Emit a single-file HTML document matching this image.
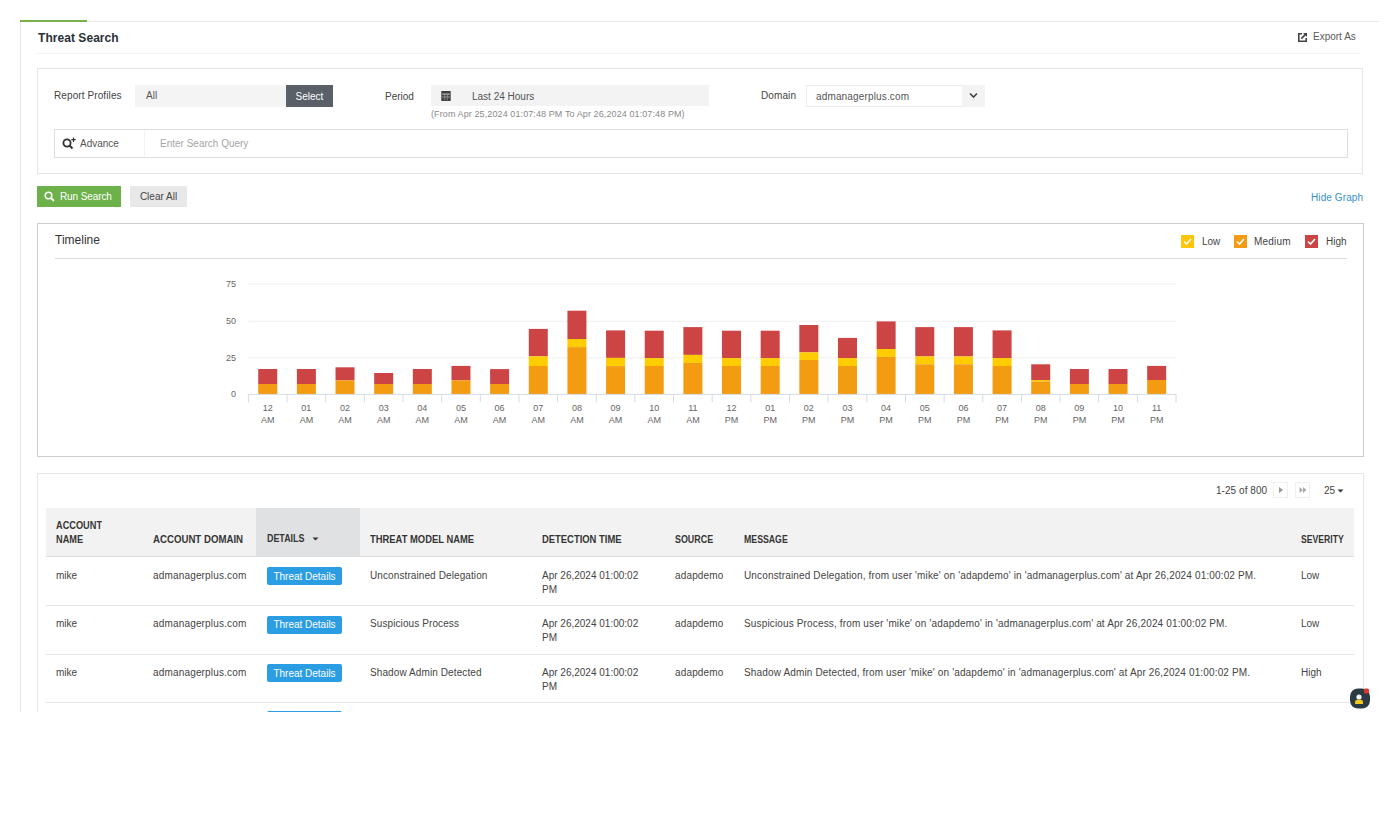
<!DOCTYPE html>
<html><head><meta charset="utf-8">
<style>
*{box-sizing:border-box;margin:0;padding:0}
html,body{width:1400px;height:826px;background:#fff;overflow:hidden}
body{font-family:"Liberation Sans",sans-serif;font-size:10px;color:#333;position:relative}
.a{position:absolute}
.t{position:absolute;white-space:nowrap;line-height:14px}
#clip{position:absolute;left:0;top:0;width:1400px;height:712px;overflow:hidden}
.box{position:absolute;border:1px solid #e3e3e3}
.btn{position:absolute;display:flex;align-items:center;white-space:nowrap}
.th{position:absolute;font-weight:bold;font-size:10px;line-height:14.3px;color:#363636;white-space:nowrap;transform-origin:0 0}
.td{position:absolute;font-size:10px;line-height:14px;color:#444;white-space:nowrap}
.tdb{position:absolute;background:#2b9de3;color:#fff;border-radius:2px;height:18px;width:75px;display:flex;align-items:center;justify-content:center;font-size:10px}
.rl{position:absolute;left:46px;width:1308px;height:1px;background:#e6e6e6}
</style></head><body>
<div id="clip">
  <!-- outer frame -->
  <div class="a" style="left:20px;top:21px;width:1360px;height:1px;background:#ebebeb"></div>
  <div class="a" style="left:20px;top:20px;width:67px;height:2px;background:#76b14c"></div>
  <div class="a" style="left:20px;top:22px;width:1px;height:700px;background:#e6e6e6"></div>

  <!-- header -->
  <div class="t" style="left:38px;top:31px;font-size:12px;font-weight:bold;color:#2a3036;line-height:14px;letter-spacing:0.05px">Threat Search</div>
  <div class="a" style="left:37px;top:53px;width:1323px;height:1px;background:#f2f2f2"></div>
  <svg class="a" style="left:1298px;top:33px" width="9" height="9" viewBox="0 0 9 9">
    <path d="M4 0.8 H0.8 V8.2 H8.2 V5" fill="none" stroke="#444" stroke-width="1.6"/>
    <path d="M5 0 H9 V4 Z" fill="#444"/>
    <path d="M3.3 5.7 L7.3 1.7" stroke="#444" stroke-width="1.7"/>
  </svg>
  <div class="t" style="left:1313px;top:30px;color:#5a5a5a">Export As</div>

  <!-- filter box -->
  <div class="box" style="left:37px;top:68px;width:1326px;height:106px;border-color:#e6e6e6"></div>
  <div class="t" style="left:54px;top:89px;color:#444;letter-spacing:0.1px">Report Profiles</div>
  <div class="a" style="left:135px;top:85px;width:151px;height:22px;background:#f4f4f4"></div>
  <div class="t" style="left:146px;top:89px;color:#555">All</div>
  <div class="btn" style="left:286px;top:85px;width:47px;height:22px;background:#596068;color:#fff;justify-content:center">Select</div>

  <div class="t" style="left:385px;top:90px;color:#444">Period</div>
  <div class="a" style="left:431px;top:85px;width:278px;height:21px;background:#f3f3f3"></div>
  <svg class="a" style="left:441px;top:91px" width="10" height="10" viewBox="0 0 10 10">
    <rect x="0.3" y="0" width="9.4" height="10" fill="#3f3f3f"/>
    <rect x="1.2" y="2.6" width="7.6" height="1" fill="#d8d8d8"/>
    <rect x="1.2" y="5.6" width="7.6" height="0.8" fill="#b8b8b8"/>
    <rect x="3.4" y="3.6" width="0.8" height="5.6" fill="#909090"/>
    <rect x="5.9" y="3.6" width="0.8" height="5.6" fill="#909090"/>
  </svg>
  <div class="t" style="left:472px;top:90px;color:#555">Last 24 Hours</div>
  <div class="t" style="left:431px;top:107px;font-size:9px;color:#8a8a8a;letter-spacing:0.1px">(From Apr 25,2024 01:07:48 PM To Apr 26,2024 01:07:48 PM)</div>

  <div class="t" style="left:761px;top:89px;color:#444;letter-spacing:0.1px">Domain</div>
  <div class="a" style="left:806px;top:85px;width:179px;height:22px;border:1px solid #ececec;background:#fff"></div>
  <div class="a" style="left:962px;top:85px;width:23px;height:22px;background:#f3f3f3"></div>
  <svg class="a" style="left:969px;top:92px" width="9" height="7" viewBox="0 0 9 7">
    <path d="M1 1.5 L4.5 5 L8 1.5" fill="none" stroke="#444" stroke-width="1.6"/>
  </svg>
  <div class="t" style="left:816px;top:90px;color:#555;letter-spacing:0.15px">admanagerplus.com</div>

  <div class="box" style="left:54px;top:129px;width:1294px;height:29px;border-color:#dedede"></div>
  <div class="a" style="left:144px;top:130px;width:1px;height:27px;background:#f3f3f3"></div>
  <svg class="a" style="left:62px;top:137px" width="15" height="13" viewBox="0 0 15 13">
    <circle cx="5" cy="6" r="3.6" fill="none" stroke="#333" stroke-width="1.8"/>
    <path d="M7.5 8.5 L10.5 11.5" stroke="#333" stroke-width="2"/>
    <path d="M11.5 0.5 V5 M9.3 2.7 H13.7" stroke="#333" stroke-width="1.2"/>
  </svg>
  <div class="t" style="left:80px;top:137px;color:#555">Advance</div>
  <div class="t" style="left:160px;top:137px;color:#a5a5a5">Enter Search Query</div>

  <!-- buttons -->
  <div class="btn" style="left:37px;top:186px;width:84px;height:21px;background:#6cb14a;color:#fff">
    <svg style="margin-left:7px" width="11" height="11" viewBox="0 0 11 11"><circle cx="4.5" cy="4.5" r="3.3" fill="none" stroke="#fff" stroke-width="1.6"/><path d="M7 7 L10 10" stroke="#fff" stroke-width="1.8"/></svg>
    <span style="margin-left:5px;letter-spacing:-0.1px">Run Search</span>
  </div>
  <div class="btn" style="left:130px;top:186px;width:57px;height:21px;background:#e8e8e8;color:#444;justify-content:center">Clear All</div>
  <div class="t" style="left:1311px;top:191px;color:#3a8fd0;letter-spacing:0.1px">Hide Graph</div>

  <!-- timeline -->
  <div class="box" style="left:37px;top:223px;width:1327px;height:234px;border-color:#cdcdcd"></div>
  <div class="t" style="left:55px;top:233px;font-size:12px;color:#333">Timeline</div>
  <div class="a" style="left:55px;top:258px;width:1292px;height:1px;background:#dcdcdc"></div>
  <!-- legend -->
  <svg class="a" style="left:1181px;top:235px" width="13" height="13" viewBox="0 0 13 13"><rect width="13" height="13" fill="#fdc60a"/><path d="M3 6.5 L5.5 9 L10 4" fill="none" stroke="#fff" stroke-width="1.4"/></svg>
  <div class="t" style="left:1202px;top:235px;color:#444">Low</div>
  <svg class="a" style="left:1234px;top:235px" width="13" height="13" viewBox="0 0 13 13"><rect width="13" height="13" fill="#f39c12"/><path d="M3 6.5 L5.5 9 L10 4" fill="none" stroke="#fff" stroke-width="1.6"/></svg>
  <div class="t" style="left:1254px;top:235px;color:#444;letter-spacing:0.2px">Medium</div>
  <svg class="a" style="left:1305px;top:235px" width="13" height="13" viewBox="0 0 13 13"><rect width="13" height="13" fill="#cc4444"/><path d="M3 6.5 L5.5 9 L10 4" fill="none" stroke="#fff" stroke-width="1.6"/></svg>
  <div class="t" style="left:1326px;top:235px;color:#444">High</div>

  <!-- CHART -->
  <svg id="chart" class="a" style="left:0;top:0;font-family:'Liberation Sans',sans-serif" width="1400" height="460"><rect x="248.4" y="357.4" width="927.6" height="1" fill="#f0f0f0"/><rect x="248.4" y="320.7" width="927.6" height="1" fill="#f0f0f0"/><rect x="248.4" y="283.5" width="927.6" height="1" fill="#f0f0f0"/><text x="236" y="397.4" text-anchor="end" font-size="9" fill="#666">0</text><text x="236" y="360.9" text-anchor="end" font-size="9" fill="#666">25</text><text x="236" y="324.2" text-anchor="end" font-size="9" fill="#666">50</text><text x="236" y="287.0" text-anchor="end" font-size="9" fill="#666">75</text><rect x="258.23" y="369.00" width="19" height="15.00" fill="#cc4444"/><rect x="258.23" y="384.00" width="19" height="10.40" fill="#f39c12"/><text x="267.73" y="410.8" text-anchor="middle" font-size="9" fill="#666">12</text><text x="267.73" y="422.5" text-anchor="middle" font-size="9" fill="#666">AM</text><rect x="296.88" y="369.00" width="19" height="15.00" fill="#cc4444"/><rect x="296.88" y="384.00" width="19" height="10.40" fill="#f39c12"/><text x="306.38" y="410.8" text-anchor="middle" font-size="9" fill="#666">01</text><text x="306.38" y="422.5" text-anchor="middle" font-size="9" fill="#666">AM</text><rect x="335.52" y="367.30" width="19" height="13.10" fill="#cc4444"/><rect x="335.52" y="380.40" width="19" height="14.00" fill="#f39c12"/><text x="345.02" y="410.8" text-anchor="middle" font-size="9" fill="#666">02</text><text x="345.02" y="422.5" text-anchor="middle" font-size="9" fill="#666">AM</text><rect x="374.18" y="373.00" width="19" height="11.00" fill="#cc4444"/><rect x="374.18" y="384.00" width="19" height="10.40" fill="#f39c12"/><text x="383.68" y="410.8" text-anchor="middle" font-size="9" fill="#666">03</text><text x="383.68" y="422.5" text-anchor="middle" font-size="9" fill="#666">AM</text><rect x="412.82" y="369.00" width="19" height="15.00" fill="#cc4444"/><rect x="412.82" y="384.00" width="19" height="10.40" fill="#f39c12"/><text x="422.32" y="410.8" text-anchor="middle" font-size="9" fill="#666">04</text><text x="422.32" y="422.5" text-anchor="middle" font-size="9" fill="#666">AM</text><rect x="451.47" y="365.90" width="19" height="14.50" fill="#cc4444"/><rect x="451.47" y="380.40" width="19" height="14.00" fill="#f39c12"/><text x="460.97" y="410.8" text-anchor="middle" font-size="9" fill="#666">05</text><text x="460.97" y="422.5" text-anchor="middle" font-size="9" fill="#666">AM</text><rect x="490.12" y="369.10" width="19" height="14.90" fill="#cc4444"/><rect x="490.12" y="384.00" width="19" height="10.40" fill="#f39c12"/><text x="499.62" y="410.8" text-anchor="middle" font-size="9" fill="#666">06</text><text x="499.62" y="422.5" text-anchor="middle" font-size="9" fill="#666">AM</text><rect x="528.78" y="328.90" width="19" height="27.50" fill="#cc4444"/><rect x="528.78" y="356.40" width="19" height="9.60" fill="#ffcc00"/><rect x="528.78" y="366.00" width="19" height="28.40" fill="#f39c12"/><text x="538.28" y="410.8" text-anchor="middle" font-size="9" fill="#666">07</text><text x="538.28" y="422.5" text-anchor="middle" font-size="9" fill="#666">AM</text><rect x="567.43" y="310.70" width="19" height="28.30" fill="#cc4444"/><rect x="567.43" y="339.00" width="19" height="8.10" fill="#ffcc00"/><rect x="567.43" y="347.10" width="19" height="47.30" fill="#f39c12"/><text x="576.93" y="410.8" text-anchor="middle" font-size="9" fill="#666">08</text><text x="576.93" y="422.5" text-anchor="middle" font-size="9" fill="#666">AM</text><rect x="606.08" y="330.40" width="19" height="27.50" fill="#cc4444"/><rect x="606.08" y="357.90" width="19" height="8.20" fill="#ffcc00"/><rect x="606.08" y="366.10" width="19" height="28.30" fill="#f39c12"/><text x="615.58" y="410.8" text-anchor="middle" font-size="9" fill="#666">09</text><text x="615.58" y="422.5" text-anchor="middle" font-size="9" fill="#666">AM</text><rect x="644.73" y="330.70" width="19" height="27.40" fill="#cc4444"/><rect x="644.73" y="358.10" width="19" height="7.90" fill="#ffcc00"/><rect x="644.73" y="366.00" width="19" height="28.40" fill="#f39c12"/><text x="654.23" y="410.8" text-anchor="middle" font-size="9" fill="#666">10</text><text x="654.23" y="422.5" text-anchor="middle" font-size="9" fill="#666">AM</text><rect x="683.38" y="327.10" width="19" height="27.80" fill="#cc4444"/><rect x="683.38" y="354.90" width="19" height="8.00" fill="#ffcc00"/><rect x="683.38" y="362.90" width="19" height="31.50" fill="#f39c12"/><text x="692.88" y="410.8" text-anchor="middle" font-size="9" fill="#666">11</text><text x="692.88" y="422.5" text-anchor="middle" font-size="9" fill="#666">AM</text><rect x="722.02" y="330.70" width="19" height="27.40" fill="#cc4444"/><rect x="722.02" y="358.10" width="19" height="7.90" fill="#ffcc00"/><rect x="722.02" y="366.00" width="19" height="28.40" fill="#f39c12"/><text x="731.52" y="410.8" text-anchor="middle" font-size="9" fill="#666">12</text><text x="731.52" y="422.5" text-anchor="middle" font-size="9" fill="#666">PM</text><rect x="760.68" y="330.70" width="19" height="27.40" fill="#cc4444"/><rect x="760.68" y="358.10" width="19" height="7.90" fill="#ffcc00"/><rect x="760.68" y="366.00" width="19" height="28.40" fill="#f39c12"/><text x="770.18" y="410.8" text-anchor="middle" font-size="9" fill="#666">01</text><text x="770.18" y="422.5" text-anchor="middle" font-size="9" fill="#666">PM</text><rect x="799.33" y="325.00" width="19" height="27.40" fill="#cc4444"/><rect x="799.33" y="352.40" width="19" height="7.60" fill="#ffcc00"/><rect x="799.33" y="360.00" width="19" height="34.40" fill="#f39c12"/><text x="808.83" y="410.8" text-anchor="middle" font-size="9" fill="#666">02</text><text x="808.83" y="422.5" text-anchor="middle" font-size="9" fill="#666">PM</text><rect x="837.98" y="337.90" width="19" height="20.20" fill="#cc4444"/><rect x="837.98" y="358.10" width="19" height="7.90" fill="#ffcc00"/><rect x="837.98" y="366.00" width="19" height="28.40" fill="#f39c12"/><text x="847.48" y="410.8" text-anchor="middle" font-size="9" fill="#666">03</text><text x="847.48" y="422.5" text-anchor="middle" font-size="9" fill="#666">PM</text><rect x="876.62" y="321.40" width="19" height="27.60" fill="#cc4444"/><rect x="876.62" y="349.00" width="19" height="7.90" fill="#ffcc00"/><rect x="876.62" y="356.90" width="19" height="37.50" fill="#f39c12"/><text x="886.12" y="410.8" text-anchor="middle" font-size="9" fill="#666">04</text><text x="886.12" y="422.5" text-anchor="middle" font-size="9" fill="#666">PM</text><rect x="915.27" y="327.10" width="19" height="29.30" fill="#cc4444"/><rect x="915.27" y="356.40" width="19" height="7.90" fill="#ffcc00"/><rect x="915.27" y="364.30" width="19" height="30.10" fill="#f39c12"/><text x="924.77" y="410.8" text-anchor="middle" font-size="9" fill="#666">05</text><text x="924.77" y="422.5" text-anchor="middle" font-size="9" fill="#666">PM</text><rect x="953.92" y="327.10" width="19" height="29.30" fill="#cc4444"/><rect x="953.92" y="356.40" width="19" height="7.90" fill="#ffcc00"/><rect x="953.92" y="364.30" width="19" height="30.10" fill="#f39c12"/><text x="963.42" y="410.8" text-anchor="middle" font-size="9" fill="#666">06</text><text x="963.42" y="422.5" text-anchor="middle" font-size="9" fill="#666">PM</text><rect x="992.58" y="330.40" width="19" height="27.70" fill="#cc4444"/><rect x="992.58" y="358.10" width="19" height="7.90" fill="#ffcc00"/><rect x="992.58" y="366.00" width="19" height="28.40" fill="#f39c12"/><text x="1002.08" y="410.8" text-anchor="middle" font-size="9" fill="#666">07</text><text x="1002.08" y="422.5" text-anchor="middle" font-size="9" fill="#666">PM</text><rect x="1031.22" y="364.30" width="19" height="15.70" fill="#cc4444"/><rect x="1031.22" y="380.00" width="19" height="1.40" fill="#ffcc00"/><rect x="1031.22" y="381.40" width="19" height="13.00" fill="#f39c12"/><text x="1040.72" y="410.8" text-anchor="middle" font-size="9" fill="#666">08</text><text x="1040.72" y="422.5" text-anchor="middle" font-size="9" fill="#666">PM</text><rect x="1069.88" y="369.00" width="19" height="15.00" fill="#cc4444"/><rect x="1069.88" y="384.00" width="19" height="10.40" fill="#f39c12"/><text x="1079.38" y="410.8" text-anchor="middle" font-size="9" fill="#666">09</text><text x="1079.38" y="422.5" text-anchor="middle" font-size="9" fill="#666">PM</text><rect x="1108.53" y="369.00" width="19" height="15.00" fill="#cc4444"/><rect x="1108.53" y="384.00" width="19" height="10.40" fill="#f39c12"/><text x="1118.03" y="410.8" text-anchor="middle" font-size="9" fill="#666">10</text><text x="1118.03" y="422.5" text-anchor="middle" font-size="9" fill="#666">PM</text><rect x="1147.17" y="365.90" width="19" height="14.10" fill="#cc4444"/><rect x="1147.17" y="380.00" width="19" height="14.40" fill="#f39c12"/><text x="1156.67" y="410.8" text-anchor="middle" font-size="9" fill="#666">11</text><text x="1156.67" y="422.5" text-anchor="middle" font-size="9" fill="#666">PM</text><rect x="248.4" y="393.9" width="927.6" height="1" fill="#d5dbe5"/><rect x="247.90" y="394.4" width="1" height="8" fill="#d5dbe5"/><rect x="286.55" y="394.4" width="1" height="8" fill="#d5dbe5"/><rect x="325.20" y="394.4" width="1" height="8" fill="#d5dbe5"/><rect x="363.85" y="394.4" width="1" height="8" fill="#d5dbe5"/><rect x="402.50" y="394.4" width="1" height="8" fill="#d5dbe5"/><rect x="441.15" y="394.4" width="1" height="8" fill="#d5dbe5"/><rect x="479.80" y="394.4" width="1" height="8" fill="#d5dbe5"/><rect x="518.45" y="394.4" width="1" height="8" fill="#d5dbe5"/><rect x="557.10" y="394.4" width="1" height="8" fill="#d5dbe5"/><rect x="595.75" y="394.4" width="1" height="8" fill="#d5dbe5"/><rect x="634.40" y="394.4" width="1" height="8" fill="#d5dbe5"/><rect x="673.05" y="394.4" width="1" height="8" fill="#d5dbe5"/><rect x="711.70" y="394.4" width="1" height="8" fill="#d5dbe5"/><rect x="750.35" y="394.4" width="1" height="8" fill="#d5dbe5"/><rect x="789.00" y="394.4" width="1" height="8" fill="#d5dbe5"/><rect x="827.65" y="394.4" width="1" height="8" fill="#d5dbe5"/><rect x="866.30" y="394.4" width="1" height="8" fill="#d5dbe5"/><rect x="904.95" y="394.4" width="1" height="8" fill="#d5dbe5"/><rect x="943.60" y="394.4" width="1" height="8" fill="#d5dbe5"/><rect x="982.25" y="394.4" width="1" height="8" fill="#d5dbe5"/><rect x="1020.90" y="394.4" width="1" height="8" fill="#d5dbe5"/><rect x="1059.55" y="394.4" width="1" height="8" fill="#d5dbe5"/><rect x="1098.20" y="394.4" width="1" height="8" fill="#d5dbe5"/><rect x="1136.85" y="394.4" width="1" height="8" fill="#d5dbe5"/><rect x="1175.50" y="394.4" width="1" height="8" fill="#d5dbe5"/></svg>

  <!-- table section -->
  <div class="box" style="left:37px;top:473px;width:1327px;height:300px;border-color:#e6e6e6"></div>
  <div class="t" style="left:1216px;top:484px;color:#444;letter-spacing:0.05px">1-25 of 800</div>
  <div class="a" style="left:1273px;top:482px;width:15px;height:16px;border:1px solid #efefef"></div>
  <svg class="a" style="left:1278px;top:486px" width="6" height="8" viewBox="0 0 6 8"><path d="M1 1 L5 4 L1 7 Z" fill="#999"/></svg>
  <div class="a" style="left:1295px;top:482px;width:15px;height:16px;border:1px solid #efefef"></div>
  <svg class="a" style="left:1298px;top:486px" width="10" height="8" viewBox="0 0 10 8"><path d="M1.5 1 L5 4 L1.5 7 Z M5 1 L8.5 4 L5 7 Z" fill="#aaa"/></svg>
  <div class="t" style="left:1324px;top:484px;color:#444">25</div>
  <svg class="a" style="left:1337px;top:489px" width="7" height="4" viewBox="0 0 7 4"><path d="M0.5 0.5 H6.5 L3.5 3.5 Z" fill="#333"/></svg>

  <div class="a" style="left:46px;top:508px;width:1308px;height:48px;background:#f2f2f2"></div>
  <div class="a" style="left:256px;top:508px;width:104px;height:48px;background:#e0e1e2"></div>
  <div class="a" style="left:46px;top:556px;width:1308px;height:1px;background:#dedede"></div>
  <div class="th" style="left:56px;top:519px;transform:scaleX(0.92)">ACCOUNT<br>NAME</div>
  <div class="th" style="left:153px;top:533px;transform:scaleX(0.965)">ACCOUNT DOMAIN</div>
  <div class="th" style="left:267px;top:532px;transform:scaleX(0.89)">DETAILS</div>
  <svg class="a" style="left:312px;top:537px" width="7" height="4" viewBox="0 0 7 4"><path d="M0.5 0.5 H6.5 L3.5 3.5 Z" fill="#333"/></svg>
  <div class="th" style="left:370px;top:533px;transform:scaleX(0.94)">THREAT MODEL NAME</div>
  <div class="th" style="left:542px;top:533px;transform:scaleX(0.942)">DETECTION TIME</div>
  <div class="th" style="left:675px;top:533px;transform:scaleX(0.89)">SOURCE</div>
  <div class="th" style="left:744px;top:533px;transform:scaleX(0.875)">MESSAGE</div>
  <div class="th" style="left:1301px;top:533px;transform:scaleX(0.865)">SEVERITY</div>

  <div class="td" style="left:56px;top:568.5px">mike</div><div class="td" style="left:153px;top:568.5px;letter-spacing:0.17px">admanagerplus.com</div><div class="tdb" style="left:267px;top:567.0px">Threat Details</div><div class="td" style="left:370px;top:568.5px;letter-spacing:0.1px">Unconstrained Delegation</div><div class="td" style="left:542px;top:568.5px">Apr 26,2024 01:00:02<br>PM</div><div class="td" style="left:675px;top:568.5px;letter-spacing:0.15px">adapdemo</div><div class="td" style="left:744px;top:568.5px;letter-spacing:0.15px">Unconstrained Delegation, from user 'mike' on 'adapdemo' in 'admanagerplus.com' at Apr 26,2024 01:00:02 PM.</div><div class="td" style="left:1301px;top:568.5px">Low</div><div class="rl" style="top:605.0px"></div><div class="td" style="left:56px;top:617.0px">mike</div><div class="td" style="left:153px;top:617.0px;letter-spacing:0.17px">admanagerplus.com</div><div class="tdb" style="left:267px;top:615.5px">Threat Details</div><div class="td" style="left:370px;top:617.0px;letter-spacing:0.1px">Suspicious Process</div><div class="td" style="left:542px;top:617.0px">Apr 26,2024 01:00:02<br>PM</div><div class="td" style="left:675px;top:617.0px;letter-spacing:0.15px">adapdemo</div><div class="td" style="left:744px;top:617.0px;letter-spacing:0.15px">Suspicious Process, from user 'mike' on 'adapdemo' in 'admanagerplus.com' at Apr 26,2024 01:00:02 PM.</div><div class="td" style="left:1301px;top:617.0px">Low</div><div class="rl" style="top:653.5px"></div><div class="td" style="left:56px;top:665.5px">mike</div><div class="td" style="left:153px;top:665.5px;letter-spacing:0.17px">admanagerplus.com</div><div class="tdb" style="left:267px;top:664.0px">Threat Details</div><div class="td" style="left:370px;top:665.5px;letter-spacing:0.1px">Shadow Admin Detected</div><div class="td" style="left:542px;top:665.5px">Apr 26,2024 01:00:02<br>PM</div><div class="td" style="left:675px;top:665.5px;letter-spacing:0.15px">adapdemo</div><div class="td" style="left:744px;top:665.5px;letter-spacing:0.15px">Shadow Admin Detected, from user 'mike' on 'adapdemo' in 'admanagerplus.com' at Apr 26,2024 01:00:02 PM.</div><div class="td" style="left:1301px;top:665.5px">High</div><div class="rl" style="top:702.0px"></div><div class="tdb" style="left:267px;top:711px">Threat Details</div>

  <!-- chat icon -->
  <div class="a" style="left:1350px;top:688px;width:20px;height:24px;background:#fff"></div>
  <svg class="a" style="left:1349px;top:687px" width="23" height="23" viewBox="0 0 23 23">
    <rect x="1" y="1.5" width="20" height="20" rx="8" fill="#2c3a44"/>
    <circle cx="10" cy="10" r="2.6" fill="#f4f6f8"/>
    <path d="M6 17 V15.2 Q6 12.8 8.5 12.8 H11.5 Q14 12.8 14 15.2 V17 Z" fill="#f2c81b"/>
    <rect x="15" y="1.5" width="5" height="5" rx="1.5" fill="#e0362b"/>
  </svg>
</div>
</body></html>
